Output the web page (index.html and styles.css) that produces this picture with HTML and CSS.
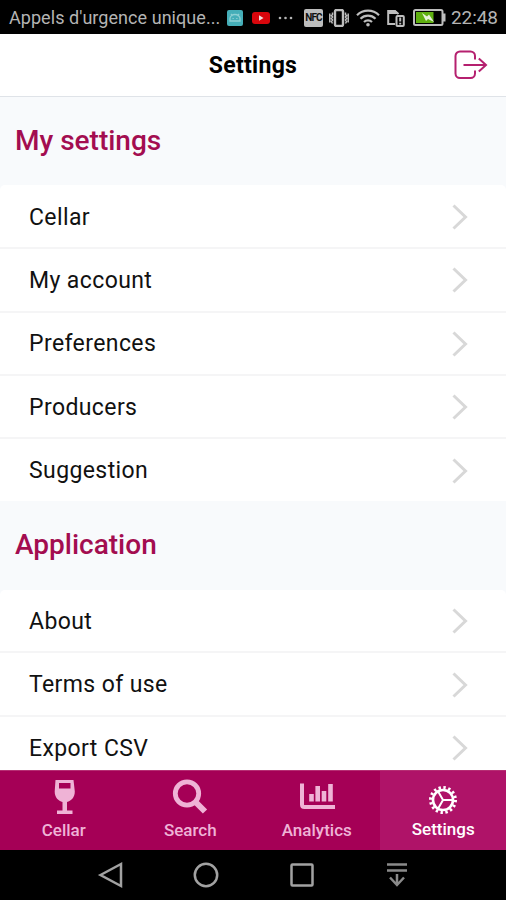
FILE: index.html
```html
<!DOCTYPE html>
<html lang="en">
<head>
    <meta charset="utf-8">
    <title>Settings</title>
    <link rel="stylesheet" href="styles.css">
</head>
<body>
    <div class="status-bar">
        <span class="carrier">Appels d'urgence unique...</span>
        <svg class="s-app" width="16" height="16" viewBox="0 0 16 16">
            <rect width="16" height="16" rx="2" fill="#45aeb8"/>
            <path d="M3 11V8.5a5 4 0 0 1 10 0V11zM4 4l1.5 2M12 4l-1.5 2" fill="none" stroke="#8ed0d4" stroke-width="1.3"/>
            <path d="M5.5 8.5h1.3M9.2 8.5h1.3" stroke="#8ed0d4"/>
        </svg>
        <svg class="s-video" width="18" height="12" viewBox="0 0 18 12">
            <rect width="18" height="12" rx="3" fill="#d8060c"/>
            <path d="M7 3.3v5.4L11.5 6z" fill="#f2dede"/>
        </svg>
        <svg class="s-more" width="15" height="4" viewBox="0 0 15 4" fill="#b4b4b4">
            <circle cx="2" cy="2" r="1.3"/><circle cx="7.5" cy="2" r="1.3"/><circle cx="13" cy="2" r="1.3"/>
        </svg>
        <span class="s-nfc">NFC</span>
        <svg class="s-vibrate" width="20" height="18" viewBox="0 0 20 18" fill="none" stroke="#bdbdbd">
            <rect x="6" y="1" width="8" height="16" rx="1.5" stroke-width="2.4"/>
            <path d="M3.500 3.500v2l-1 1 1 1.500-1 1.500 1 1.500-1 1.500 1 2M.8 4.500v9M16.500 3.500v2l1 1-1 1.500 1 1.500-1 1.500 1 1.500-1 2M19.200 4.500v9" stroke-width="1.5"/>
        </svg>
        <svg class="s-wifi" width="24" height="18" viewBox="0 0 24 18" fill="none" stroke="#bdbdbd" stroke-width="2.2">
            <path d="M1 6.200a15.600 15.600 0 0 1 22 0M4.500 9.700a10.600 10.600 0 0 1 15 0M8 13a5.700 5.700 0 0 1 8 0"/>
            <circle cx="12" cy="15.800" r="1.800" fill="#bdbdbd" stroke="none"/>
        </svg>
        <svg class="s-sim" width="18" height="18" viewBox="0 0 18 18" fill="none" stroke="#bdbdbd" stroke-width="2">
            <path d="M8 15H1.200V2H8l3.500 3"/>
            <path d="M1 5V1h7l4 4z" fill="#bdbdbd" stroke="none"/>
            <rect x="9.500" y="7" width="7.300" height="10" rx="1"/>
            <path d="M13.200 8.500v4M13.200 13.800v1.800"/>
        </svg>
        <svg class="s-battery" width="33" height="17" viewBox="0 0 33 17">
            <rect x="1" y="1" width="28.500" height="15" rx="1.500" fill="none" stroke="#bdbdbd" stroke-width="2"/>
            <path d="M30 4.500h2.500v8H30z" fill="#bdbdbd"/>
            <rect x="3" y="3" width="17.500" height="11" fill="#5fb010"/>
            <path d="M9 4l5 3.500 2-2 5 7.500-6-3-2 2z" fill="#e8f2dc"/>
        </svg>
        <span class="clock">22:48</span>
    </div>

    <header class="header">
        <h1 class="header-title">Settings</h1>
        <svg class="logout" width="34" height="30" viewBox="0 0 34 30" fill="none" stroke="#b5206f" stroke-width="2">
            <path d="M21 9.500V6a4.500 4.500 0 0 0-4.500-4.500H6A4.500 4.500 0 0 0 1.500 6v17.500A4.500 4.500 0 0 0 6 28h10.500a4.500 4.500 0 0 0 4.500-4.500V20.500"/>
            <path d="M9.500 15H32M24.800 8.500L32 15l-7.200 6.500"/>
        </svg>
    </header>

    <main class="content">
        <h2 class="section-title">My settings</h2>
        <ul class="list">
            <li class="row"><span>Cellar</span><svg class="chevron" viewBox="0 0 16 26"><path d="M1.500 1.500L13.500 13l-12 11.500"/></svg></li>
            <li class="row"><span>My account</span><svg class="chevron" viewBox="0 0 16 26"><path d="M1.500 1.500L13.500 13l-12 11.500"/></svg></li>
            <li class="row"><span>Preferences</span><svg class="chevron" viewBox="0 0 16 26"><path d="M1.500 1.500L13.500 13l-12 11.500"/></svg></li>
            <li class="row"><span>Producers</span><svg class="chevron" viewBox="0 0 16 26"><path d="M1.500 1.500L13.500 13l-12 11.500"/></svg></li>
            <li class="row"><span>Suggestion</span><svg class="chevron" viewBox="0 0 16 26"><path d="M1.500 1.500L13.500 13l-12 11.500"/></svg></li>
        </ul>
        <h2 class="section-title">Application</h2>
        <ul class="list">
            <li class="row"><span>About</span><svg class="chevron" viewBox="0 0 16 26"><path d="M1.500 1.500L13.500 13l-12 11.500"/></svg></li>
            <li class="row"><span>Terms of use</span><svg class="chevron" viewBox="0 0 16 26"><path d="M1.500 1.500L13.500 13l-12 11.500"/></svg></li>
            <li class="row"><span>Export CSV</span><svg class="chevron" viewBox="0 0 16 26"><path d="M1.500 1.500L13.500 13l-12 11.500"/></svg></li>
        </ul>
    </main>

    <nav class="tabs">
        <a class="tab">
            <svg width="36" height="36" viewBox="0 0 36 36" fill="#efb3d6">
                <path fill-rule="evenodd" d="M9.500 1h18l1.300 11.500c0 6-3.800 9.500-7.800 10.500v8.500h5.500V35H11v-3.500h5.500V23c-4-1-7.800-4.500-7.800-10.500zM13 4v5.500h11.500V4z"/>
            </svg>
            <span>Cellar</span>
        </a>
        <a class="tab">
            <svg width="36" height="36" viewBox="0 0 36 36" fill="none" stroke="#efb3d6">
                <circle cx="15" cy="14.500" r="11.700" stroke-width="4.800"/>
                <path d="M23.500 23L33 32.500" stroke-width="6"/>
            </svg>
            <span>Search</span>
        </a>
        <a class="tab">
            <svg width="36" height="36" viewBox="0 0 36 36" fill="none" stroke="#efb3d6">
                <path d="M3 4.500V25.500Q3 28 5.500 28H36" stroke-width="4"/>
                <path d="M12.500 15v7.500M18.700 7v15.500M25 12v10.500M31.500 5v17.500" stroke-width="4.600"/>
            </svg>
            <span>Analytics</span>
        </a>
        <a class="tab tab-active">
            <svg width="36" height="36" viewBox="0 0 36 36" fill="none" stroke="#fff">
                <circle cx="18" cy="18" r="12.500" stroke-width="3" stroke-dasharray="2.400 2.509"/>
                <circle cx="18" cy="18" r="10" stroke-width="2.600"/>
                <path d="M18 18h10M18 18l-5-8.700M18 18l-5 8.700" stroke-width="2"/>
            </svg>
            <span>Settings</span>
        </a>
    </nav>

    <div class="nav-keys">
        <svg width="28" height="28" viewBox="0 0 28 28"><path d="M3.500 14L24 3v22z"/></svg>
        <svg width="28" height="28" viewBox="0 0 28 28"><circle cx="14" cy="14" r="11.200"/></svg>
        <svg width="28" height="28" viewBox="0 0 28 28"><rect x="3.500" y="3.500" width="21" height="21" rx="1"/></svg>
        <svg class="key-hide" width="28" height="28" viewBox="0 0 28 28"><path d="M4 3.500h20M4 9.500h20M14 13v11M7 16.500l7 7.500 7-7.500"/></svg>
    </div>
</body>
</html>
```
FILE: styles.css
```css
* {
    box-sizing: border-box;
}
body {
    margin: 0;
    width: 506px;
    height: 900px;
    display: flex;
    flex-direction: column;
    overflow: hidden;
    font-family: Roboto, "Liberation Sans", sans-serif;
    background: #f8fafc;
    color: #111;
}
.status-bar {
    flex: none;
    height: 34px;
    padding: 1px 0 0 9px;
    display: flex;
    align-items: center;
    background: #000;
    color: #b4b4b4;
    white-space: nowrap;
}
.status-bar svg {
    flex: none;
}
.carrier {
    width: 218px;
    font-size: 18px;
    letter-spacing: 0.05px;
}
.s-video { margin-left: 9px; }
.s-more { margin-left: 8px; }
.s-nfc {
    flex: none;
    width: 19px;
    height: 18px;
    margin-left: 11px;
    border-radius: 2px;
    background: #bdbdbd;
    color: #111;
    font-size: 10px;
    font-weight: 700;
    letter-spacing: -0.8px;
    line-height: 18px;
    text-align: center;
}
.s-vibrate { margin-left: 6px; }
.s-wifi { margin-left: 7px; }
.s-sim { margin-left: 7px; }
.s-battery { margin-left: 8px; }
.clock {
    margin-left: 5px;
    font-size: 19px;
    letter-spacing: -0.1px;
}
.header {
    flex: none;
    height: 63px;
    padding: 0 18px 0 51px;
    display: flex;
    align-items: center;
    background: #fff;
    border-bottom: 1px solid #dfe3e8;
}
.header-title {
    flex: 1;
    margin: 0;
    padding-left: 1px;
    font-size: 23px;
    font-weight: 700;
    letter-spacing: 0.3px;
    text-align: center;
    color: #000;
}
.content {
    flex: 1;
    min-height: 0;
    overflow: hidden;
}
.section-title {
    margin: 0;
    height: 88px;
    padding-left: 15px;
    font-size: 28px;
    font-weight: 500;
    line-height: 87px;
    color: #a30d50;
}
.list {
    margin: 0;
    padding: 1px 0 0;
    list-style: none;
    background: #fff;
    border-radius: 5px 5px 0 0;
}
.list + .section-title {
    height: 89px;
}
.row {
    height: 63.3px;
    padding: 1px 38px 0 29px;
    display: flex;
    align-items: center;
    justify-content: space-between;
    border-bottom: 2px solid #f5f5f6;
    font-size: 23px;
    letter-spacing: 0.4px;
}
.row:last-child {
    height: 62px;
    border-bottom: 0;
}
.list + .section-title + .list {
    padding-top: 0;
}
.chevron {
    width: 16px;
    height: 26px;
    fill: none;
    stroke: #d8d8d8;
    stroke-width: 3;
}
.tabs {
    flex: none;
    height: 80px;
    display: flex;
    background: #a50056;
    border-top: 1px solid #b62e73;
}
.tab {
    flex: 1;
    padding: 8px 0 0 1px;
    display: flex;
    flex-direction: column;
    align-items: center;
    font-size: 17px;
    font-weight: 500;
    line-height: 20px;
    color: #efb3d6;
}
.tab span {
    margin-top: 5px;
}
.tab-active {
    padding-top: 11px;
    background: #af1368;
    color: #fff;
}
.tab-active span {
    margin-top: 1px;
}
.nav-keys {
    flex: none;
    height: 50px;
    padding: 0 95px 0 97px;
    display: flex;
    align-items: center;
    justify-content: space-between;
    background: #000;
}
.nav-keys svg {
    fill: none;
    stroke: #a2a2a2;
    stroke-width: 2.5;
}
.nav-keys .key-hide {
    stroke: #8a8a8a;
}
```
